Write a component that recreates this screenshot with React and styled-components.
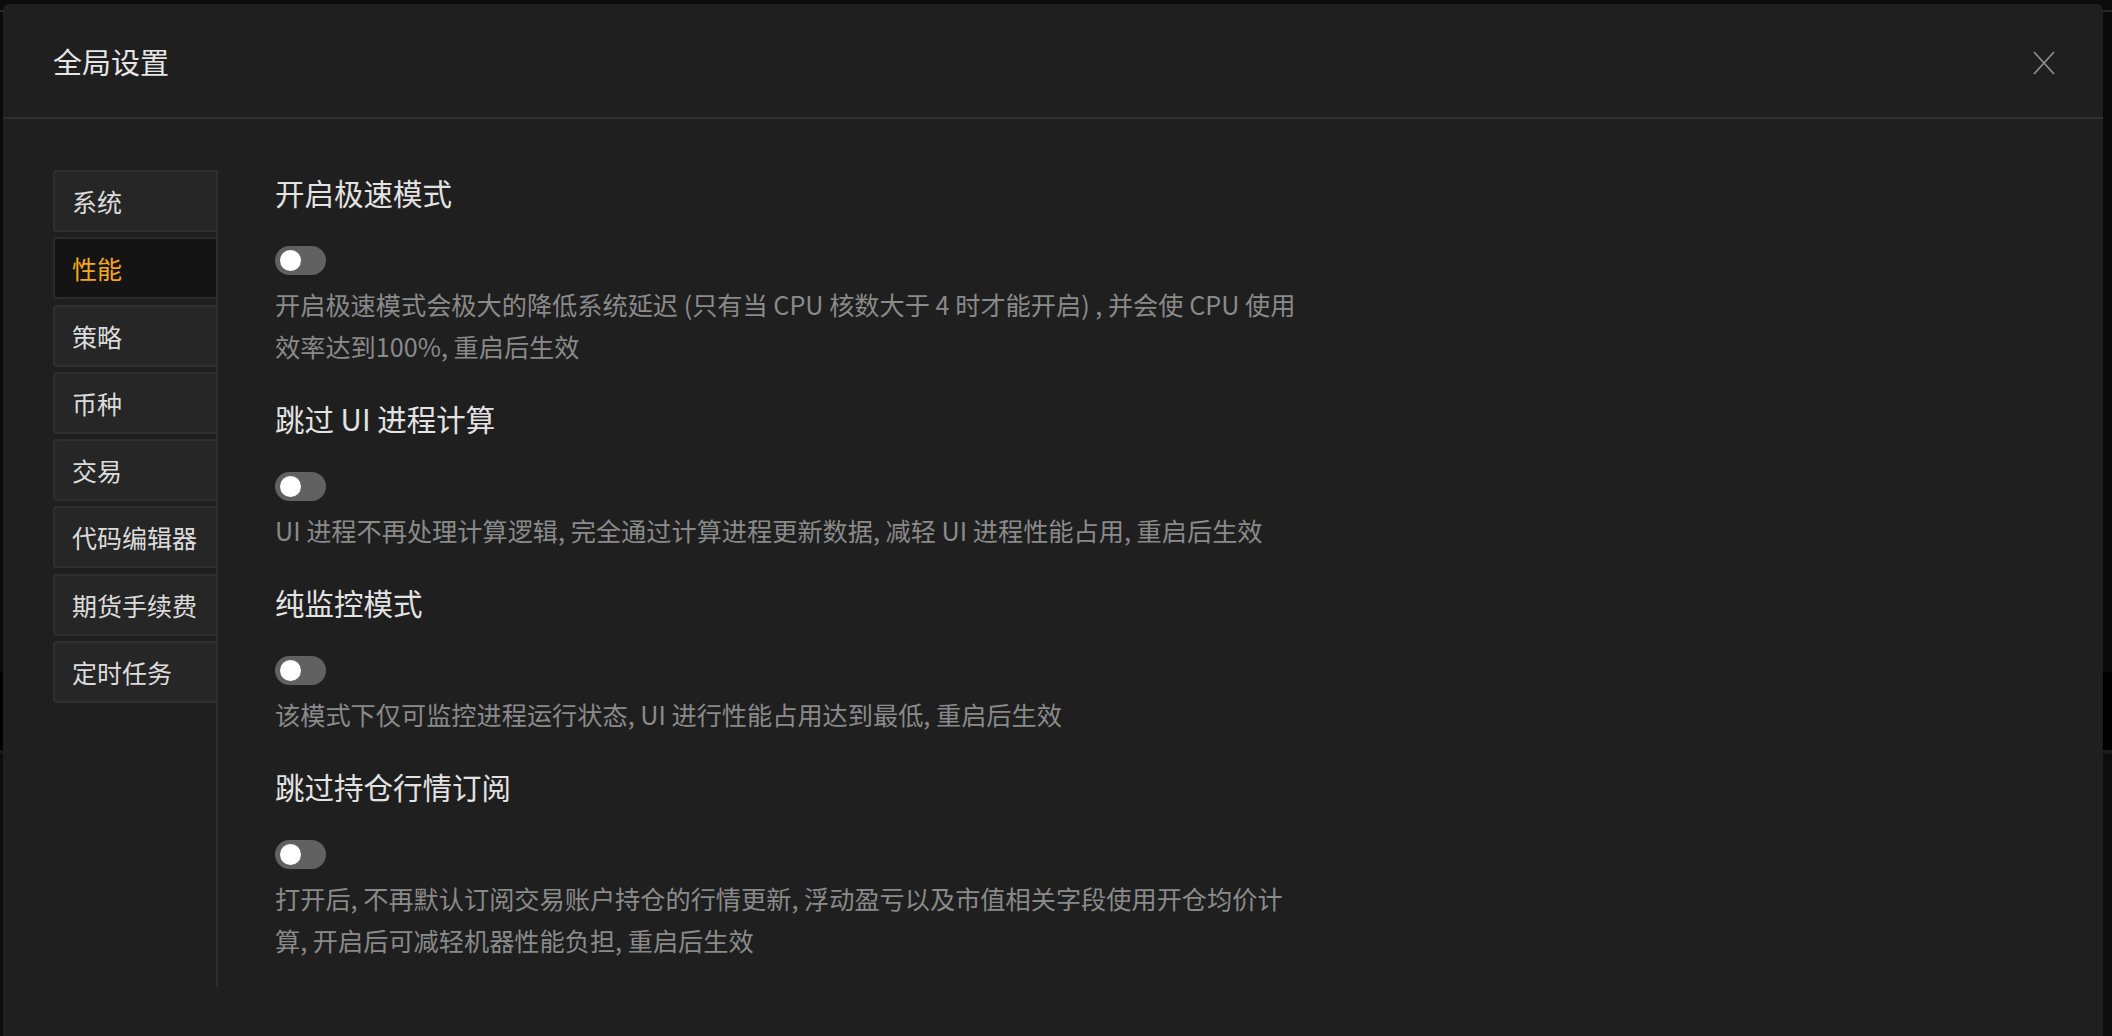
import { useState } from "react";
import styled, { createGlobalStyle } from "styled-components";

const GlobalStyle = createGlobalStyle`
  html, body {
    margin: 0;
    padding: 0;
    background: #0c0c0c;
    font-family: "Noto Sans CJK SC", "Noto Sans", sans-serif;
  }
  * { box-sizing: border-box; }
`;

const tabs = ["系统", "性能", "策略", "币种", "交易", "代码编辑器", "期货手续费", "定时任务"];

const options = [
  {
    title: "开启极速模式",
    desc: "开启极速模式会极大的降低系统延迟 (只有当 CPU 核数大于 4 时才能开启) , 并会使 CPU 使用效率达到100%, 重启后生效",
  },
  {
    title: "跳过 UI 进程计算",
    desc: "UI 进程不再处理计算逻辑, 完全通过计算进程更新数据, 减轻 UI 进程性能占用, 重启后生效",
  },
  {
    title: "纯监控模式",
    desc: "该模式下仅可监控进程运行状态, UI 进行性能占用达到最低, 重启后生效",
  },
  {
    title: "跳过持仓行情订阅",
    desc: "打开后, 不再默认订阅交易账户持仓的行情更新, 浮动盈亏以及市值相关字段使用开仓均价计算, 开启后可减轻机器性能负担, 重启后生效",
  },
];

const App = () => {
  const [active, setActive] = useState(1);
  const [flags, setFlags] = useState(options.map(() => false));

  const toggle = (i) =>
    setFlags((prev) => prev.map((v, idx) => (idx === i ? !v : v)));

  return (
    <>
      <GlobalStyle />
      <Page>
        <Backdrop>
          <Band $h={10} />
          <Band $h={2} $c="#262626" />
          <Band $h={660} $c="#0a0a0a" />
          <Band $h={78} $c="#000" />
          <Band $h={4} $c="#1a1a1a" />
          <Band $h={282} $c="#0d0d0d" />
        </Backdrop>

        <Modal>
          <Header>
            <Title>全局设置</Title>
            <CloseButton aria-label="close">
              <svg width="22" height="24" viewBox="0 0 22 24">
                <path d="M1 1 L21 23 M21 1 L1 23" stroke="#8c8c8c" strokeWidth="1.8" fill="none" />
              </svg>
            </CloseButton>
          </Header>

          <Body>
            <Sidebar>
              {tabs.map((t, i) => (
                <Tab key={t} $active={i === active} onClick={() => setActive(i)}>
                  {t}
                </Tab>
              ))}
            </Sidebar>

            <Content>
              {options.map((o, i) => (
                <Section key={o.title}>
                  <SectionTitle>{o.title}</SectionTitle>
                  <Switch $on={flags[i]} onClick={() => toggle(i)}>
                    <Knob $on={flags[i]} />
                  </Switch>
                  <Desc>{o.desc}</Desc>
                </Section>
              ))}
            </Content>
          </Body>
        </Modal>
      </Page>
    </>
  );
};
export default App;

const Page = styled.div`
  position: relative;
  width: 2112px;
  height: 1036px;
  overflow: hidden;
  background: #0c0c0c;
`;

const Backdrop = styled.div`
  display: flex;
  flex-direction: column;
  height: 100%;
`;

const Band = styled.div`
  height: ${(p) => p.$h}px;
  background: ${(p) => p.$c || "#0c0c0c"};
`;

const Modal = styled.div`
  position: absolute;
  left: 3px;
  top: 4px;
  right: 9px;
  bottom: -40px;
  background: #1f1f1f;
  border-radius: 6px 6px 0 0;
  display: flex;
  flex-direction: column;
`;

const Header = styled.div`
  height: 115px;
  flex-shrink: 0;
  display: flex;
  align-items: center;
  justify-content: space-between;
  padding: 0 48px 0 50px;
  border-bottom: 2px solid #303030;
`;

const Title = styled.div`
  font-size: 29px;
  color: #e6e6e6;
  line-height: 40px;
  padding-top: 1px;
`;

const CloseButton = styled.button`
  background: none;
  border: none;
  padding: 0;
  display: flex;
  cursor: pointer;
  margin-top: 5px;
`;

const Body = styled.div`
  display: flex;
  align-items: flex-start;
  padding: 51px 0 0 50px;
`;

const Sidebar = styled.div`
  width: 165px;
  height: 817px;
  border-right: 2px solid #2e2e2e;
  display: flex;
  flex-direction: column;
  gap: 5.3px;
`;

const Tab = styled.div`
  height: 62px;
  display: flex;
  align-items: center;
  padding-left: 17px;
  font-size: 25px;
  color: ${(p) => (p.$active ? "#f7a81b" : "#dcdcdc")};
  background: ${(p) => (p.$active ? "#141414" : "#262626")};
  border: 2px solid ${(p) => (p.$active ? "#2a2a2a" : "#2f2f2f")};
  border-right: none;
  border-radius: 4px 0 0 4px;
  cursor: pointer;
`;

const Content = styled.div`
  margin-left: 57px;
  display: flex;
  flex-direction: column;
  gap: 29px;
`;

const Section = styled.div`
  display: flex;
  flex-direction: column;
  align-items: flex-start;
`;

const SectionTitle = styled.div`
  font-size: 29.5px;
  line-height: 44px;
  color: #e3e3e3;
`;

const Switch = styled.button`
  position: relative;
  width: 51px;
  height: 29px;
  margin-top: 32px;
  border: none;
  padding: 0;
  border-radius: 15px;
  background: ${(p) => (p.$on ? "#f7a81b" : "#616161")};
  cursor: pointer;
`;

const Knob = styled.span`
  position: absolute;
  top: 4px;
  left: ${(p) => (p.$on ? "26px" : "5px")};
  width: 21px;
  height: 21px;
  border-radius: 50%;
  background: #fff;
`;

const Desc = styled.div`
  margin-top: 8px;
  max-width: 1028px;
  font-size: 25.2px;
  line-height: 42px;
  color: #8a8a8a;
`;
